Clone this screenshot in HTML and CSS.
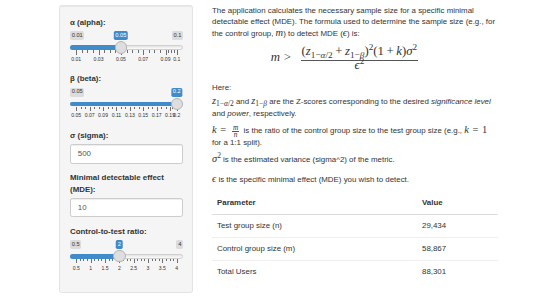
FILE: index.html
```html
<!DOCTYPE html>
<html lang="en">
<head>
<meta charset="utf-8">
<title>Sample size calculator</title>
<link rel="stylesheet" href="styles.css">
</head>
<body>
<div class="page">
  <aside class="well">
    <div class="form-group">
      <label class="control-label">α (alpha):</label>
      <div class="irs" style="--p:0.4444">
        <div class="irs-labels">
          <span class="irs-min">0.01</span>
          <span class="irs-max">0.1</span>
          <span class="irs-single">0.05</span>
        </div>
        <div class="irs-track">
          <span class="irs-line"></span>
          <span class="irs-bar"></span>
          <span class="irs-handle"></span>
        </div>
        <div class="irs-grid">
          <span class="pol" style="left:0%"></span>
          <span class="pol s" style="left:5.556%"></span>
          <span class="pol s" style="left:11.111%"></span>
          <span class="pol s" style="left:16.667%"></span>
          <span class="pol" style="left:22.222%"></span>
          <span class="pol s" style="left:27.778%"></span>
          <span class="pol s" style="left:33.333%"></span>
          <span class="pol s" style="left:38.889%"></span>
          <span class="pol" style="left:44.444%"></span>
          <span class="pol s" style="left:50%"></span>
          <span class="pol s" style="left:55.556%"></span>
          <span class="pol s" style="left:61.111%"></span>
          <span class="pol" style="left:66.667%"></span>
          <span class="pol s" style="left:72.222%"></span>
          <span class="pol s" style="left:77.778%"></span>
          <span class="pol s" style="left:83.333%"></span>
          <span class="pol" style="left:88.889%"></span>
          <span class="pol s" style="left:91.667%"></span>
          <span class="pol s" style="left:94.444%"></span>
          <span class="pol s" style="left:97.222%"></span>
          <span class="pol" style="left:100%"></span>
          <span class="gt" style="left:0%">0.01</span>
          <span class="gt" style="left:22.222%">0.03</span>
          <span class="gt" style="left:44.444%">0.05</span>
          <span class="gt" style="left:66.667%">0.07</span>
          <span class="gt" style="left:88.889%">0.09</span>
          <span class="gt" style="left:100%">0.1</span>
        </div>
      </div>
    </div>

    <div class="form-group">
      <label class="control-label">β (beta):</label>
      <div class="irs" style="--p:1">
        <div class="irs-labels">
          <span class="irs-min">0.05</span>
          <span class="irs-single">0.2</span>
        </div>
        <div class="irs-track">
          <span class="irs-line"></span>
          <span class="irs-bar"></span>
          <span class="irs-handle"></span>
        </div>
        <div class="irs-grid">
          <span class="pol" style="left:0%"></span>
          <span class="pol s" style="left:4.444%"></span>
          <span class="pol s" style="left:8.889%"></span>
          <span class="pol" style="left:13.333%"></span>
          <span class="pol s" style="left:17.778%"></span>
          <span class="pol s" style="left:22.222%"></span>
          <span class="pol" style="left:26.667%"></span>
          <span class="pol s" style="left:31.111%"></span>
          <span class="pol s" style="left:35.556%"></span>
          <span class="pol" style="left:40%"></span>
          <span class="pol s" style="left:44.444%"></span>
          <span class="pol s" style="left:48.889%"></span>
          <span class="pol" style="left:53.333%"></span>
          <span class="pol s" style="left:57.778%"></span>
          <span class="pol s" style="left:62.222%"></span>
          <span class="pol" style="left:66.667%"></span>
          <span class="pol s" style="left:71.111%"></span>
          <span class="pol s" style="left:75.556%"></span>
          <span class="pol" style="left:80%"></span>
          <span class="pol s" style="left:84.444%"></span>
          <span class="pol s" style="left:88.889%"></span>
          <span class="pol" style="left:93.333%"></span>
          <span class="pol s" style="left:95.556%"></span>
          <span class="pol s" style="left:97.778%"></span>
          <span class="pol" style="left:100%"></span>
          <span class="gt" style="left:0%">0.05</span>
          <span class="gt" style="left:13.333%">0.07</span>
          <span class="gt" style="left:26.667%">0.09</span>
          <span class="gt" style="left:40%">0.11</span>
          <span class="gt" style="left:53.333%">0.13</span>
          <span class="gt" style="left:66.667%">0.15</span>
          <span class="gt" style="left:80%">0.17</span>
          <span class="gt" style="left:93.333%">0.19</span>
          <span class="gt" style="left:100%">0.2</span>
        </div>
      </div>
    </div>

    <div class="form-group">
      <label class="control-label">σ (sigma):</label>
      <input class="form-control" type="text" value="500">
    </div>

    <div class="form-group">
      <label class="control-label">Minimal detectable effect (MDE):</label>
      <input class="form-control" type="text" value="10">
    </div>

    <div class="form-group">
      <label class="control-label">Control-to-test ratio:</label>
      <div class="irs" style="--p:0.4286">
        <div class="irs-labels">
          <span class="irs-min">0.5</span>
          <span class="irs-max">4</span>
          <span class="irs-single">2</span>
        </div>
        <div class="irs-track">
          <span class="irs-line"></span>
          <span class="irs-bar"></span>
          <span class="irs-handle"></span>
        </div>
        <div class="irs-grid">
          <span class="pol" style="left:0%"></span>
          <span class="pol s" style="left:3.571%"></span>
          <span class="pol s" style="left:7.143%"></span>
          <span class="pol s" style="left:10.714%"></span>
          <span class="pol" style="left:14.286%"></span>
          <span class="pol s" style="left:17.857%"></span>
          <span class="pol s" style="left:21.429%"></span>
          <span class="pol s" style="left:25%"></span>
          <span class="pol" style="left:28.571%"></span>
          <span class="pol s" style="left:32.143%"></span>
          <span class="pol s" style="left:35.714%"></span>
          <span class="pol s" style="left:39.286%"></span>
          <span class="pol" style="left:42.857%"></span>
          <span class="pol s" style="left:46.429%"></span>
          <span class="pol s" style="left:50%"></span>
          <span class="pol s" style="left:53.571%"></span>
          <span class="pol" style="left:57.143%"></span>
          <span class="pol s" style="left:60.714%"></span>
          <span class="pol s" style="left:64.286%"></span>
          <span class="pol s" style="left:67.857%"></span>
          <span class="pol" style="left:71.429%"></span>
          <span class="pol s" style="left:75%"></span>
          <span class="pol s" style="left:78.571%"></span>
          <span class="pol s" style="left:82.143%"></span>
          <span class="pol" style="left:85.714%"></span>
          <span class="pol s" style="left:89.286%"></span>
          <span class="pol s" style="left:92.857%"></span>
          <span class="pol s" style="left:96.429%"></span>
          <span class="pol" style="left:100%"></span>
          <span class="gt" style="left:0%">0.5</span>
          <span class="gt" style="left:14.286%">1</span>
          <span class="gt" style="left:28.571%">1.5</span>
          <span class="gt" style="left:42.857%">2</span>
          <span class="gt" style="left:57.143%">2.5</span>
          <span class="gt" style="left:71.429%">3</span>
          <span class="gt" style="left:85.714%">3.5</span>
          <span class="gt" style="left:100%">4</span>
        </div>
      </div>
    </div>
  </aside>

  <main class="main">
    <p>The application calculates the necessary sample size for a specific minimal detectable effect (MDE). The formula used to determine the sample size (e.g., for the control group, <span class="math"><i>m</i></span>) to detect MDE (<span class="math"><i>ϵ</i></span>) is:</p>

    <div class="display">
      <span class="math big"><i>m</i><span class="rel">&gt;</span></span>
      <span class="frac math big">
        <span class="num">(<i>z</i><span class="sub">1−<i>α</i>/2</span><span class="bin">+</span><i>z</i><span class="sub">1−<i>β</i></span>)<span class="sup">2</span>(1<span class="bin">+</span><i>k</i>)<i>σ</i><span class="sup">2</span></span>
        <span class="den"><i>ϵ</i><span class="sup">2</span></span>
      </span>
    </div>

    <p class="here">Here:</p>
    <p class="zline"><span class="math"><i>z</i><span class="sub">1−<i>α</i>/2</span></span> and <span class="math"><i>z</i><span class="sub">1−<i>β</i></span></span> are the Z-scores corresponding to the desired <em>significance level</em> and <em>power</em>, respectively.</p>
    <p><span class="math"><i>k</i><span class="rel">=</span><span class="ifrac"><i class="fn">m</i><i class="fd">n</i></span></span> is the ratio of the control group size to the test group size (e.g., <span class="math"><i>k</i><span class="rel">=</span>1</span> for a 1:1 split).</p>
    <p class="spaced"><span class="math"><i>σ</i><span class="sup">2</span></span> is the estimated variance (sigma^2) of the metric.</p>
    <p><span class="math"><i>ϵ</i></span> is the specific minimal effect (MDE) you wish to detect.</p>

    <table class="table">
      <thead>
        <tr><th class="c1">Parameter</th><th>Value</th></tr>
      </thead>
      <tbody>
        <tr><td>Test group size (n)</td><td>29,434</td></tr>
        <tr><td>Control group size (m)</td><td>58,867</td></tr>
        <tr><td>Total Users</td><td>88,301</td></tr>
      </tbody>
    </table>
  </main>
</div>
</body>
</html>
```

FILE: styles.css
```css
* { box-sizing: border-box; }

html, body { margin: 0; padding: 0; background: #ffffff; }

body {
  font-family: "Liberation Sans", Arial, Helvetica, sans-serif;
  font-size: 7.9px;
  line-height: 11.4px;
  color: #333333;
}

.page {
  display: flex;
  align-items: flex-start;
  gap: 19px;
  padding: 5px 0 0 59px;
}

/* ---------- sidebar ---------- */
.well {
  flex: none;
  width: 134px;
  padding: 11px 9px 9.6px 10px;
  background: #f5f5f5;
  border: 1px solid #e3e3e3;
  border-radius: 2.5px;
  box-shadow: inset 0 1px 1px rgba(0, 0, 0, 0.05);
}

.form-group { margin-bottom: 8.55px; }

.control-label {
  display: block;
  font-weight: bold;
  margin-bottom: 2.85px;
}

.form-control {
  display: block;
  width: 100%;
  height: 19.4px;
  padding: 0 6.8px;
  font-family: inherit;
  font-size: 7.9px;
  color: #555555;
  background: #ffffff;
  border: 1px solid #cccccc;
  border-radius: 2.3px;
  box-shadow: inset 0 1px 1px rgba(0, 0, 0, 0.075);
  outline: none;
}

/* ---------- range slider ---------- */
.irs {
  display: flex;
  flex-direction: column;
  height: 33.7px;
}

.irs-labels {
  position: relative;
  display: flex;
  justify-content: space-between;
  height: 8.8px;
}

.irs-min, .irs-max, .irs-single {
  font-size: 5.7px;
  line-height: 7.6px;
  padding: 0.6px 1.7px;
  border-radius: 1.7px;
  white-space: nowrap;
}

.irs-min, .irs-max {
  background: rgba(0, 0, 0, 0.1);
  color: #333333;
}
.irs-max { margin-left: auto; }

.irs-single {
  position: absolute;
  top: 0;
  left: calc(6.25px + var(--p) * (100% - 12.5px));
  transform: translateX(-50%);
  background: #428bca;
  color: #ffffff;
  z-index: 3;
}

.irs-track {
  position: relative;
  height: 12.5px;
  margin-top: 1.2px;
  z-index: 2;
}

.irs-line {
  position: absolute;
  left: 0;
  right: 0;
  top: 3.95px;
  height: 4.6px;
  border: 0.6px solid #cfcfcf;
  border-radius: 4.6px;
  background: linear-gradient(to bottom, #e4e4e4, #fbfbfb);
}

.irs-bar {
  position: absolute;
  left: 0;
  top: 3.95px;
  height: 4.6px;
  width: calc(6.25px + var(--p) * (100% - 12.5px));
  background: #428bca;
  border-radius: 4.6px 0 0 4.6px;
}

.irs-handle {
  position: absolute;
  top: 0;
  left: calc(var(--p) * (100% - 12.5px));
  width: 12.5px;
  height: 12.5px;
  border-radius: 50%;
  background: #dedede;
  border: 0.7px solid #b5b5b5;
}

.irs-grid {
  position: relative;
  margin: -3.5px 6.25px 0;
  flex: 1;
}

.pol {
  position: absolute;
  top: 0;
  width: 0.7px;
  height: 4.5px;
  background: #6f6f6f;
}
.pol.s { height: 2.3px; }

.gt {
  position: absolute;
  top: 6.7px;
  font-size: 5.1px;
  line-height: 5.1px;
  color: #333333;
  white-space: nowrap;
  transform: translateX(-50%);
}

/* ---------- main panel ---------- */
.main {
  flex: none;
  width: 286px;
}

.main p { margin: 0 0 5px; }
.main p.here { margin-bottom: 3px; }
.main p.zline { margin-bottom: 6px; }
.main p.spaced { margin-bottom: 8.7px; }

.math {
  font-family: "Liberation Serif", "DejaVu Serif", serif;
  font-size: 10.4px;
  line-height: 0;
  white-space: nowrap;
}
.math i { font-style: italic; }
.math.big { font-size: 12.8px; line-height: 15px; }

.rel { margin: 0 3.6px; font-style: normal; }
.big .rel { margin: 0 6.5px 0 3.8px; }
.bin { margin: 0 2.6px; }

.sub {
  font-size: 72%;
  line-height: 0;
  vertical-align: -0.3em;
}
.sup {
  font-size: 72%;
  line-height: 0;
  vertical-align: 0.5em;
}

.display {
  display: flex;
  justify-content: center;
  align-items: center;
  padding-right: 21px;
  margin: 3.5px 0 11.6px;
}

.frac {
  display: inline-flex;
  flex-direction: column;
  align-items: center;
  margin-left: 3px;
}
.num {
  line-height: 15px;
  padding: 0 1px 1px;
  border-bottom: 0.8px solid #555555;
}
.den { line-height: 9px; }

.ifrac {
  display: inline-flex;
  flex-direction: column;
  align-items: center;
  vertical-align: middle;
  font-size: 7.4px;
  line-height: 5.4px;
  margin: 0 2px;
}
.ifrac .fn { border-bottom: 0.7px solid #555555; padding: 0 1.2px 0.3px; }

/* ---------- table ---------- */
.table {
  width: 100%;
  margin-top: 6.5px;
  border-collapse: collapse;
  border-spacing: 0;
}
.table th, .table td {
  text-align: left;
  padding: 5.3px 5px;
  line-height: 11.4px;
}
.table th { font-weight: bold; border-bottom: 1.2px solid #dcdcdc; }
.table td { border-top: 1px solid #efefef; }
.table .c1 { width: 205px; }
```
